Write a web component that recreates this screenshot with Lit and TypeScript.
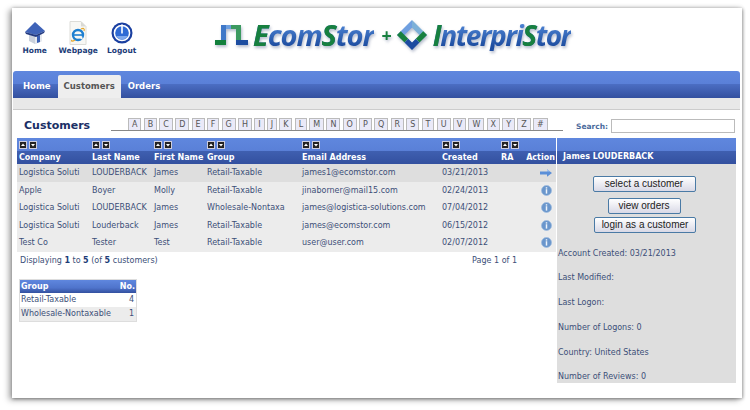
import { LitElement, html, css, svg } from "lit";
import { customElement } from "lit/decorators.js";

type Customer = {
  company: string;
  last: string;
  first: string;
  group: string;
  email: string;
  created: string;
};

const customers: Customer[] = [
  { company: "Logistica Soluti", last: "LOUDERBACK", first: "James", group: "Retail-Taxable", email: "james1@ecomstor.com", created: "03/21/2013" },
  { company: "Apple", last: "Boyer", first: "Molly", group: "Retail-Taxable", email: "jinaborner@mail15.com", created: "02/24/2013" },
  { company: "Logistica Soluti", last: "LOUDERBACK", first: "James", group: "Wholesale-Nontaxa", email: "james@logistica-solutions.com", created: "07/04/2012" },
  { company: "Logistica Soluti", last: "Louderback", first: "James", group: "Retail-Taxable", email: "james@ecomstor.com", created: "06/15/2012" },
  { company: "Test Co", last: "Tester", first: "Test", group: "Retail-Taxable", email: "user@user.com", created: "02/07/2012" },
];

const letters = "ABCDEFGHIJKLMNOPQRSTUVWXYZ#".split("");

const details = [
  "Account Created: 03/21/2013",
  "Last Modified:",
  "Last Logon:",
  "Number of Logons: 0",
  "Country: United States",
  "Number of Reviews: 0",
];

const sortArrows = html`<span class="sort">
  <svg viewBox="0 0 8 8" width="8" height="8"><rect x=".5" y=".5" width="7" height="7" fill="#222" stroke="#ccd"/><path d="M2 5l2-2.4L6 5z" fill="#fff"/></svg>
  <svg viewBox="0 0 8 8" width="8" height="8"><rect x=".5" y=".5" width="7" height="7" fill="#222" stroke="#ccd"/><path d="M2 3l2 2.4L6 3z" fill="#fff"/></svg>
</span>`;

const infoIcon = svg`<svg viewBox="0 0 12 12" width="11" height="11">
  <circle cx="6" cy="6" r="5.5" fill="#6a96cc" stroke="#9dbce0" stroke-width=".8"/>
  <rect x="5.2" y="2.4" width="1.6" height="1.5" fill="#eef4fb"/>
  <rect x="5.2" y="4.6" width="1.6" height="4.8" fill="#eef4fb"/>
</svg>`;

const arrowIcon = svg`<svg viewBox="0 0 12 8" width="12" height="8">
  <path d="M0 2.5h7V.3L12 4 7 7.7V5.5H0z" fill="#5b8fd8"/>
  <path d="M0 2.5h7V.3L10 2.5z" fill="#a9c6ee"/>
</svg>`;

const homeIcon = svg`<svg viewBox="0 0 24 24" width="24" height="24">
  <path d="M6 11l8-3 5 4v8l-7 3-6-3z" fill="#c9d0dc"/>
  <path d="M12 13l7-2v9l-7 3z" fill="#e6e9ef"/>
  <path d="M14 15l3-1v7l-3 1z" fill="#3a5fb4"/>
  <path d="M2 11L12 1l10 9-9 4z" fill="#3f63b8"/>
  <path d="M2 11l11 3 9-4-1 2-8 4L3 13z" fill="#22397f"/>
</svg>`;

const pageIcon = svg`<svg viewBox="0 0 20 24" width="20" height="24">
  <path d="M2 .5h11l5 5v18H2z" fill="#f7f7f4" stroke="#dcdcd8"/>
  <path d="M13 .5v5h5z" fill="#d9d9d4"/>
  <circle cx="10" cy="14" r="5" fill="none" stroke="#1e7fd0" stroke-width="2.4"/>
  <rect x="6" y="13.2" width="8" height="1.6" fill="#1e7fd0"/>
  <path d="M11 17l4 2-1-4z" fill="#f7f7f4"/>
  <path d="M4 19c-1 1 0 2 3 0M13 8c2-1 4-1 3 2" fill="none" stroke="#e8a92c" stroke-width="1.2"/>
</svg>`;

const logoutIcon = svg`<svg viewBox="0 0 22 22" width="22" height="22">
  <circle cx="11" cy="11" r="10.5" fill="#1a3fa0"/>
  <circle cx="11" cy="11" r="7.6" fill="#2f6ad4" stroke="#fff" stroke-width="1.5"/>
  <path d="M5 14a7 7 0 0 0 12 0z" fill="#7fa8ec"/>
  <rect x="10.2" y="2.5" width="1.6" height="9" fill="#fff"/>
</svg>`;

const pulseMark = svg`<svg viewBox="0 0 34 22" width="34" height="22">
  <path d="M6 1h10v4H10z" fill="#6d9fe0"/>
  <path d="M6 1h5v15H6z" fill="#3f78c8"/>
  <path d="M0 16h11v5H0z" fill="#12803c"/>
  <path d="M16 1h10v15h-5V5h-5z" fill="#3c9a60"/>
  <path d="M21 16h5v0h7v5H21z" fill="#1d4da0"/>
</svg>`;

const diamondMark = svg`<svg viewBox="0 0 32 32" width="30" height="30">
  <path d="M16 0L0 16l4 4 12-12z" fill="#6f9fe0"/>
  <path d="M16 0l16 16-4 4L16 8z" fill="#7cb0d8"/>
  <path d="M0 16l8 8 4-4-8-8z" fill="#17803f"/>
  <path d="M32 16l-8 8-4-4 8-8z" fill="#17803f"/>
  <path d="M8 24l8 8 8-8-4-4-4 4-4-4z" fill="#1c4ba0"/>
</svg>`;

@customElement("app-root")
export class AppRoot extends LitElement {
  static styles = css`
    :host {
      display: block;
      width: 750px;
      height: 410px;
      background: #fff;
      font-family: "DejaVu Sans", Verdana, sans-serif;
      font-size: 8px;
      color: #3c4f78;
      overflow: hidden;
    }

    .card {
      box-sizing: border-box;
      width: 730px;
      height: 390px;
      margin: 8px 0 0 12px;
      padding: 0 2px 0 1px;
      background: #fff;
      box-shadow: -3px 2px 6px rgba(0, 0, 0, 0.35), 1px 1px 3px rgba(0, 0, 0, 0.3), 0 -1px 4px rgba(0, 0, 0, 0.12);
    }

    .top {
      display: flex;
      height: 63px;
    }

    .shortcuts {
      display: flex;
      width: 200px;
      padding: 12px 0 0 0;
      box-sizing: border-box;
    }

    .shortcut {
      display: flex;
      flex-direction: column;
      align-items: center;
      width: 43.5px;
      height: 36px;
      font-size: 7.5px;
      font-weight: bold;
      color: #1c3c78;
    }

    .shortcut .glyph {
      height: 25px;
      margin-bottom: 1px;
      display: flex;
      align-items: center;
    }

    .logo {
      display: flex;
      align-items: center;
      height: 32px;
      margin: 11px 0 0 2px;
      font-family: "Open Sans", sans-serif;
      font-style: italic;
      font-weight: 700;
      font-size: 29px;
      letter-spacing: -1.1px;
      filter: drop-shadow(1px 2px 1.5px rgba(40, 60, 110, 0.35));
    }

    .logo svg {
      flex: none;
    }

    .word {
      margin-left: 4px;
      line-height: 32px;
      background: linear-gradient(180deg, #4a80d0 20%, #1d4da0 85%);
      -webkit-background-clip: text;
      background-clip: text;
      color: transparent;
    }

    .word b {
      font-weight: 700;
      color: #17803f;
    }

    .word.inter {
      margin-left: 6px;
      font-size: 28px;
      letter-spacing: -1.5px;
    }

    .plus {
      margin: 0 6px 0 8px;
      font-size: 18px;
      font-weight: 700;
      font-style: normal;
      color: #17803f;
    }

    nav {
      display: flex;
      align-items: flex-end;
      height: 27px;
      padding-left: 3px;
      background: linear-gradient(180deg, #5f87de 0, #5a80d8 48%, #4b6dc2 50%, #33509f 100%);
      border-radius: 3px 3px 0 0;
      font-size: 8.5px;
      font-weight: bold;
      color: #fff;
    }

    nav span {
      padding: 0 7px;
      height: 23px;
      line-height: 23px;
    }

    nav .active {
      padding: 0 6px;
      background: #eeeeee;
      color: #555;
      border-radius: 2px 2px 0 0;
    }

    .subbar {
      height: 11px;
      background: #e8e8e8;
      border-bottom: 1px solid #ccc;
    }

    .toolbar {
      display: flex;
      align-items: flex-end;
      height: 28px;
      padding-left: 11px;
    }

    h1 {
      width: 87px;
      margin: 0 0 4px;
      font-size: 11px;
      line-height: 16px;
      color: #1b2f66;
    }

    .tabs {
      display: flex;
      align-items: flex-end;
      width: 452px;
      height: 13px;
      margin-bottom: 7px;
      border-bottom: 1px solid #888;
      padding-left: 17px;
      box-sizing: border-box;
    }

    .tabs span {
      box-sizing: border-box;
      height: 12px;
      margin-right: 2.2px;
      padding: 0 3px;
      text-align: center;
      line-height: 11px;
      font-size: 8px;
      color: #555;
      background: #eaeaf8;
      border: 1px solid #bbb;
      border-bottom: none;
    }

    .search {
      display: flex;
      align-items: center;
      height: 14px;
      margin: 0 0 5px 13px;
      font-weight: bold;
      font-size: 7.5px;
      color: #4a6a9c;
    }

    .search input {
      box-sizing: border-box;
      width: 124px;
      height: 14px;
      margin-left: 3px;
      padding: 0;
      border: 1px solid #bbb;
      background: #fff;
    }

    .body {
      display: flex;
      padding-left: 4px;
    }

    .main {
      width: 539px;
    }

    table {
      border-collapse: collapse;
      table-layout: fixed;
      width: 539px;
    }

    th {
      height: 26px;
      padding: 0 0 0 2px;
      box-sizing: border-box;
      text-align: left;
      vertical-align: top;
      font-weight: bold;
      color: #fff;
      white-space: nowrap;
      background: linear-gradient(180deg, #5f87de 0, #5a80d8 48%, #3f5fb0 50%, #33509f 100%);
    }

    th div {
      height: 12px;
      line-height: 12px;
    }

    .sort {
      display: flex;
      gap: 2px;
      height: 14px;
      align-items: center;
    }

    .sort svg {
      display: block;
    }

    td {
      height: 17.5px;
      padding: 0 0 0 2px;
      box-sizing: border-box;
      white-space: nowrap;
      overflow: hidden;
      background: #ececec;
    }

    tr.current td {
      background: #dedede;
    }

    td.action {
      padding: 0 4px 0 0;
      text-align: right;
      line-height: 0;
    }

    th.center {
      text-align: center;
      padding: 0;
    }

    .foot {
      display: flex;
      justify-content: space-between;
      padding: 3px 39px 0 3px;
      height: 12px;
      line-height: 12px;
    }

    .foot b {
      color: #1c3c78;
    }

    .groups {
      box-sizing: border-box;
      width: 118px;
      margin: 12px 0 0 2px;
      border: 1px solid #ddd;
    }

    .groups header {
      display: flex;
      justify-content: space-between;
      height: 13px;
      line-height: 13px;
      padding: 0 1px 0 1px;
      font-weight: bold;
      color: #fff;
      background: linear-gradient(180deg, #5f87de 0, #4f74cc 60%, #33509f 100%);
    }

    .groups div {
      display: flex;
      justify-content: space-between;
      height: 14px;
      line-height: 14px;
      padding: 0 2px 0 1px;
    }

    .groups div.alt {
      background: #ececec;
    }

    aside {
      width: 179px;
      height: 245px;
      background: #dedede;
      border-left: 1px solid #fff;
    }

    aside h2 {
      margin: 0;
      height: 26px;
      padding: 13px 0 0 6px;
      box-sizing: border-box;
      font-size: 8px;
      line-height: 12px;
      color: #fff;
      background: linear-gradient(180deg, #5f87de 0, #5a80d8 48%, #3f5fb0 50%, #33509f 100%);
    }

    .actions {
      display: flex;
      flex-direction: column;
      align-items: center;
      padding: 12px 5px 0 0;
      height: 75px;
    }

    button {
      box-sizing: border-box;
      height: 16px;
      padding: 0;
      border: 1px solid #4a7aa5;
      border-radius: 2px;
      background: linear-gradient(180deg, #fff, #d9d9e6);
      font-family: "Liberation Sans", Arial, sans-serif;
      font-size: 10px;
      line-height: 14px;
      color: #222;
    }

    .select {
      width: 103px;
      margin-bottom: 6px;
    }

    .orders {
      width: 73px;
      margin-bottom: 3px;
    }

    .login {
      width: 102px;
      margin-left: 2px;
    }

    .facts {
      padding: 0 0 0 1px;
      margin-top: -3.5px;
    }

    .facts p {
      margin: 0;
      height: 24.8px;
      line-height: 12px;
      white-space: nowrap;
    }
  `;

  render() {
    return html`
      <div class="card">
        <div class="top">
          <div class="shortcuts">
            <div class="shortcut"><span class="glyph">${homeIcon}</span>Home</div>
            <div class="shortcut"><span class="glyph">${pageIcon}</span>Webpage</div>
            <div class="shortcut"><span class="glyph">${logoutIcon}</span>Logout</div>
          </div>
          <div class="logo">
            ${pulseMark}
            <span class="word"><b>E</b>com<b>S</b>tor</span>
            <span class="plus">+</span>
            ${diamondMark}
            <span class="word inter"><b>I</b>nterpri<b>S</b>tor</span>
          </div>
        </div>
        <nav>
          <span>Home</span>
          <span class="active">Customers</span>
          <span>Orders</span>
        </nav>
        <div class="subbar"></div>
        <div class="toolbar">
          <h1>Customers</h1>
          <div class="tabs">
            ${letters.map((l) => html`<span>${l}</span>`)}
          </div>
          <label class="search">Search: <input /></label>
        </div>
        <div class="body">
          <div class="main">
            ${this.renderTable()}
            <div class="foot">
              <span>Displaying <b>1</b> to <b>5</b> (of <b>5</b> customers)</span>
              <span>Page 1 of 1</span>
            </div>
            <div class="groups">
              <header><span>Group</span><span>No.</span></header>
              <div><span>Retail-Taxable</span><span>4</span></div>
              <div class="alt"><span>Wholesale-Nontaxable</span><span>1</span></div>
            </div>
          </div>
          <aside>
            <h2>James LOUDERBACK</h2>
            <div class="actions">
              <button class="select">select a customer</button>
              <button class="orders">view orders</button>
              <button class="login">login as a customer</button>
            </div>
            <div class="facts">
              ${details.map((d) => html`<p>${d}</p>`)}
            </div>
          </aside>
        </div>
      </div>
    `;
  }

  private renderTable() {
    const sortable = (label: string) => html`<th>${sortArrows}<div>${label}</div></th>`;
    return html`
      <table>
        <colgroup>
          <col style="width:73px" />
          <col style="width:62px" />
          <col style="width:53px" />
          <col style="width:95px" />
          <col style="width:140px" />
          <col style="width:59px" />
          <col style="width:26px" />
          <col style="width:31px" />
        </colgroup>
        <thead>
          <tr>
            ${sortable("Company")}${sortable("Last Name")}${sortable("First Name")}${sortable("Group")}${sortable("Email Address")}${sortable("Created")}${sortable("RA")}
            <th class="center"><div class="sort"></div><div>Action</div></th>
          </tr>
        </thead>
        <tbody>
          ${customers.map(
            (c, i) => html`
              <tr class=${i === 0 ? "current" : ""}>
                <td>${c.company}</td>
                <td>${c.last}</td>
                <td>${c.first}</td>
                <td>${c.group}</td>
                <td>${c.email}</td>
                <td>${c.created}</td>
                <td></td>
                <td class="action">${i === 0 ? arrowIcon : infoIcon}</td>
              </tr>
            `,
          )}
        </tbody>
      </table>
    `;
  }
}
